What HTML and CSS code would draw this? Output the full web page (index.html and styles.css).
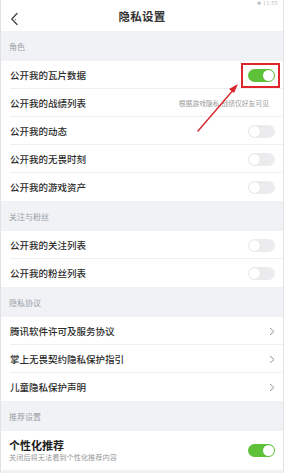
FILE: index.html
```html
<!DOCTYPE html>
<html lang="zh">
<head>
<meta charset="utf-8">
<link rel="stylesheet" href="styles.css">
</head>
<body>
<div class="page">
  <div class="header">
    <span class="status">✱ 11:55</span>
    <svg class="back" width="10" height="14" viewBox="0 0 10 14"><polyline points="7,1.5 1.8,7 7,12.5" fill="none" stroke="#444" stroke-width="1.3" stroke-linecap="round" stroke-linejoin="round"/><circle cx="5.5" cy="7.5" r="0.7" fill="#888"/></svg>
    <div class="title">隐私设置</div>
  </div>

  <div class="section">角色</div>
  <div class="row"><span class="label">公开我的瓦片数据</span><span class="toggle on"></span></div>
  <div class="row"><span class="label">公开我的战绩列表</span><span class="hint">根据游戏隐私,战绩仅好友可见</span></div>
  <div class="row"><span class="label">公开我的动态</span><span class="toggle"></span></div>
  <div class="row"><span class="label">公开我的无畏时刻</span><span class="toggle"></span></div>
  <div class="row last"><span class="label">公开我的游戏资产</span><span class="toggle"></span></div>

  <div class="section">关注与粉丝</div>
  <div class="row"><span class="label">公开我的关注列表</span><span class="toggle"></span></div>
  <div class="row last"><span class="label">公开我的粉丝列表</span><span class="toggle"></span></div>

  <div class="section">隐私协议</div>
  <div class="row"><span class="label">腾讯软件许可及服务协议</span><svg class="chev" width="6" height="9" viewBox="0 0 6 9"><polyline points="1,1 5,4.5 1,8" fill="none" stroke="#999" stroke-width="1"/></svg></div>
  <div class="row"><span class="label">掌上无畏契约隐私保护指引</span><svg class="chev" width="6" height="9" viewBox="0 0 6 9"><polyline points="1,1 5,4.5 1,8" fill="none" stroke="#999" stroke-width="1"/></svg></div>
  <div class="row last"><span class="label">儿童隐私保护声明</span><svg class="chev" width="6" height="9" viewBox="0 0 6 9"><polyline points="1,1 5,4.5 1,8" fill="none" stroke="#999" stroke-width="1"/></svg></div>

  <div class="section">推荐设置</div>
  <div class="row big last">
    <div class="stack">
      <span class="label strong">个性化推荐</span>
      <span class="sub">关闭后将无法看到个性化推荐内容</span>
    </div>
    <span class="toggle on"></span>
  </div>
  <div class="foot"></div>

  <div class="mark"></div>
  <svg class="arrow" width="284" height="473" viewBox="0 0 284 473">
    <line x1="197" y1="131" x2="234" y2="88" stroke="#d9262c" stroke-width="1.4" stroke-linecap="round"/>
    <polygon points="237,84 228,89 233,93" fill="#d9262c"/>
  </svg>
</div>
</body>
</html>
```
FILE: styles.css
```css
* { box-sizing: border-box; }
html, body { margin: 0; padding: 0; background: #fff; }
body { font-family: "Noto Sans CJK SC", "Noto Sans", sans-serif; color: #2a2a2a; }
.page {
  position: relative;
  width: 284px;
  height: 473px;
  overflow: hidden;
  display: flex;
  flex-direction: column;
  border-left: 1px solid #e2e2e2;
  border-right: 1px solid #e2e2e2;
}
.header {
  position: relative;
  height: 31px;
  flex: none;
  display: flex;
  align-items: center;
  justify-content: center;
  background: #fff;
}
.status {
  position: absolute;
  top: 0;
  right: 5px;
  font-size: 5px;
  line-height: 5px;
  color: #b5b5b5;
  letter-spacing: 0.5px;
}
.back { position: absolute; left: 9px; top: 12px; }
.title { font-size: 11.5px; font-weight: 700; color: #333; letter-spacing: 0.3px; }
.section {
  height: 30px;
  flex: none;
  display: flex;
  align-items: center;
  padding-left: 8px;
  font-size: 8px;
  color: #9a9ea6;
  background: #f0f2f6;
}
.row {
  position: relative;
  height: 28px;
  flex: none;
  display: flex;
  align-items: center;
  justify-content: space-between;
  padding: 0 8px 0 9px;
}
.row::after {
  content: "";
  position: absolute;
  left: 9px;
  right: 0;
  bottom: 0;
  height: 1px;
  background: #eeeff2;
}
.row.last::after { display: none; }
.label { font-size: 9.5px; color: #2b2b2b; font-weight: 500; }
.label.strong { font-size: 11px; font-weight: 700; color: #222; line-height: 13px; }
.hint { font-size: 6.8px; color: #9b9b9b; margin-right: 6px; }
.sub { font-size: 7.2px; color: #999; line-height: 10px; }
.stack { display: flex; flex-direction: column; margin-top: -1px; }
.row.big { height: 39px; padding-left: 8px; }
.toggle {
  position: relative;
  width: 27px;
  height: 13px;
  border-radius: 7px;
  background: #ececef;
  flex: none;
}
.toggle::after {
  content: "";
  position: absolute;
  top: 1px;
  left: 1px;
  width: 11px;
  height: 11px;
  border-radius: 50%;
  background: #fff;
  box-shadow: 0 0 1px rgba(0,0,0,0.15);
}
.toggle.on { background: #5fc13a; }
.toggle.on::after { left: 15px; }
.foot { flex: 1; background: #f0f2f6; }
.mark {
  position: absolute;
  left: 240px;
  top: 63px;
  width: 39px;
  height: 25px;
  border: 2px solid #e0262d;
}
.arrow { position: absolute; left: 0; top: 0; pointer-events: none; }
```
